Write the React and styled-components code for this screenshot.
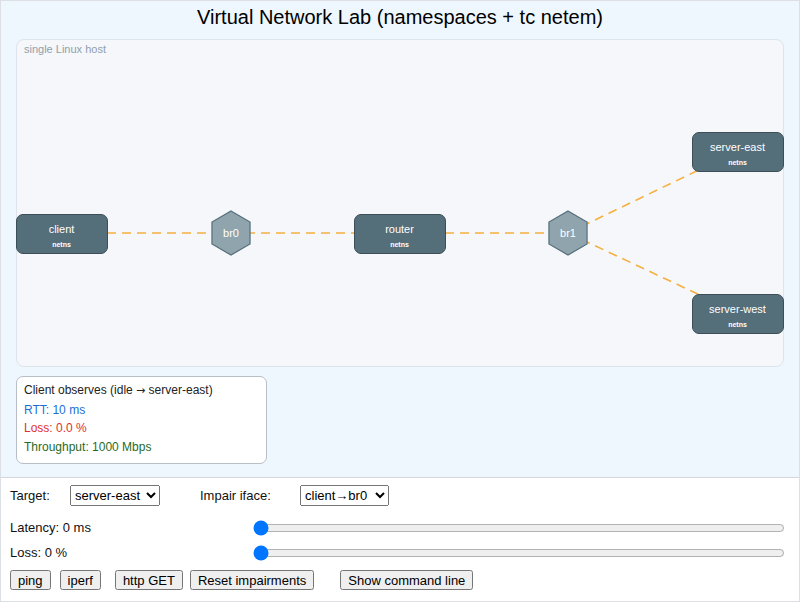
import React from "react";
import styled, { createGlobalStyle } from "styled-components";

const GlobalStyle = createGlobalStyle`
  html, body {
    margin: 0;
    padding: 0;
    background: #ffffff;
  }
  * {
    box-sizing: border-box;
  }
`;

const nodes = [
  { id: "client", x: 0, y: 174 },
  { id: "router", x: 338, y: 174 },
  { id: "server-east", x: 676, y: 92 },
  { id: "server-west", x: 676, y: 254 },
];

const bridges = [
  { id: "br0", x: 215, y: 194 },
  { id: "br1", x: 552, y: 194 },
];

const edges = [
  [46, 194, 215, 194],
  [215, 194, 384, 194],
  [384, 194, 552, 194],
  [552, 194, 722, 112],
  [552, 194, 722, 274],
];

const hexPoints = (r) =>
  [0, 1, 2, 3, 4, 5]
    .map((i) => {
      const a = (Math.PI / 3) * i - Math.PI / 2;
      return `${(r * Math.cos(a)).toFixed(2)},${(r * Math.sin(a)).toFixed(2)}`;
    })
    .join(" ");

const App = () => {
  return (
    <>
      <GlobalStyle />
      <Frame>
        <Stage>
          <Title>Virtual Network Lab (namespaces + tc netem)</Title>
          <Host>
            <HostLabel>single Linux host</HostLabel>
            <EdgeLayer width="768" height="327">
              {edges.map(([x1, y1, x2, y2], i) => (
                <line
                  key={i}
                  x1={x1}
                  y1={y1}
                  x2={x2}
                  y2={y2}
                  stroke="#f5b041"
                  strokeWidth="1.6"
                  strokeDasharray="9 6"
                />
              ))}
              {bridges.map((b) => (
                <g key={b.id} transform={`translate(${b.x} ${b.y})`}>
                  <polygon
                    points={hexPoints(22)}
                    fill="#90a4ae"
                    stroke="#546e7a"
                    strokeWidth="1.2"
                  />
                  <BridgeText x="0" y="4" textAnchor="middle">
                    {b.id}
                  </BridgeText>
                </g>
              ))}
            </EdgeLayer>
            {nodes.map((n) => (
              <Node key={n.id} $x={n.x} $y={n.y}>
                <NodeName>{n.id}</NodeName>
                <NodeKind>netns</NodeKind>
              </Node>
            ))}
          </Host>
          <Stats>
            <StatLine>
              Client observes (idle <Arrow>→</Arrow> server-east)
            </StatLine>
            <StatLine $color="#1a6fd8">RTT: 10 ms</StatLine>
            <StatLine $color="#e0302f">Loss: 0.0 %</StatLine>
            <StatLine $color="#1f6b1f">Throughput: 1000 Mbps</StatLine>
          </Stats>
        </Stage>
        <Controls>
          <Row>
            <Field $after={40}>
              <Label $width={60}>Target:</Label>
              <Select defaultValue="server-east" $width={90}>
                <option>server-east</option>
                <option>server-west</option>
              </Select>
            </Field>
            <Field>
              <Label $width={100}>Impair iface:</Label>
              <Select defaultValue="client→br0" $width={89}>
                <option>client→br0</option>
                <option>router→br1</option>
              </Select>
            </Field>
          </Row>
          <SliderRow>
            <SliderLabel>Latency: 0 ms</SliderLabel>
            <Range type="range" min="0" max="500" defaultValue="0" />
          </SliderRow>
          <SliderRow>
            <SliderLabel>Loss: 0 %</SliderLabel>
            <Range type="range" min="0" max="100" defaultValue="0" />
          </SliderRow>
          <ButtonRow>
            <Button $after={9}>ping</Button>
            <Button $after={14}>iperf</Button>
            <Button $after={7}>http GET</Button>
            <Button $after={26}>Reset impairments</Button>
            <Button>Show command line</Button>
          </ButtonRow>
        </Controls>
      </Frame>
    </>
  );
};

const Frame = styled.div`
  width: 800px;
  height: 602px;
  display: flex;
  flex-direction: column;
  border: 1px solid #dcdfe3;
  font-family: "Liberation Sans", Arial, sans-serif;
  color: #111;
`;

const Stage = styled.div`
  height: 477px;
  background: #eef6fe;
  border-bottom: 1px solid #d4d8dc;
  padding: 0 15px;
  display: flex;
  flex-direction: column;
`;

const Title = styled.h1`
  margin: 0;
  height: 38px;
  line-height: 32px;
  font-size: 20px;
  font-weight: normal;
  text-align: center;
  color: #000;
`;

const Host = styled.div`
  position: relative;
  height: 328px;
  background: #f5f7fa;
  border: 1.5px solid #dde4ec;
  border-radius: 8px;
`;

const HostLabel = styled.div`
  position: absolute;
  left: 7px;
  top: 3px;
  font-size: 11px;
  color: #90a0ac;
`;

const EdgeLayer = styled.svg`
  position: absolute;
  left: -1.5px;
  top: -1.5px;
  overflow: visible;
`;

const BridgeText = styled.text`
  font-family: "Liberation Sans", Arial, sans-serif;
  font-size: 11px;
  fill: #ffffff;
`;

const Node = styled.div`
  position: absolute;
  left: ${(p) => p.$x - 1.5}px;
  top: ${(p) => p.$y - 0.5}px;
  width: 92px;
  height: 40px;
  background: #546e7a;
  border: 1px solid #3c4e57;
  border-radius: 7px;
  color: #fff;
  display: flex;
  flex-direction: column;
  align-items: center;
  padding-top: 8px;
`;

const NodeName = styled.div`
  font-size: 11px;
  line-height: 13px;
`;

const NodeKind = styled.div`
  font-size: 7px;
  font-weight: bold;
  line-height: 9px;
  margin-top: 4px;
`;

const Stats = styled.div`
  margin-top: 9px;
  width: 251px;
  height: 88px;
  background: #fff;
  border: 1.5px solid #b7bec6;
  border-radius: 7px;
  padding: 4px 7px 0;
`;

const StatLine = styled.div`
  font-size: 12px;
  line-height: 18.7px;
  color: ${(p) => p.$color || "#222"};
`;

const Arrow = styled.span`
  font-family: "DejaVu Sans", sans-serif;
  font-size: 11px;
`;

const Controls = styled.div`
  flex: 1;
  background: #fff;
  padding: 6px 14px 0 9px;
  font-size: 13px;
  display: flex;
  flex-direction: column;
`;

const Row = styled.div`
  display: flex;
  align-items: center;
  height: 22px;
  margin-bottom: 9px;
`;

const Field = styled.div`
  display: flex;
  align-items: center;
  margin-right: ${(p) => p.$after || 0}px;
`;

const Label = styled.span`
  font-size: 13px;
  width: ${(p) => p.$width}px;
`;

const Select = styled.select`
  font-family: "Liberation Sans", Arial, sans-serif;
  font-size: 13px;
  height: 21px;
  width: ${(p) => p.$width}px;
`;

const SliderRow = styled.div`
  display: flex;
  align-items: center;
  height: 25px;
`;

const SliderLabel = styled.span`
  width: 243px;
  flex-shrink: 0;
`;

const Range = styled.input`
  flex: 1;
  margin: 0;
`;

const ButtonRow = styled.div`
  display: flex;
  align-items: center;
  margin-top: 5px;
`;

const Button = styled.button`
  font-family: "Liberation Sans", Arial, sans-serif;
  font-size: 13px;
  height: 20px;
  padding: 0 6px;
  margin-right: ${(p) => p.$after || 0}px;
`;

export default App;
